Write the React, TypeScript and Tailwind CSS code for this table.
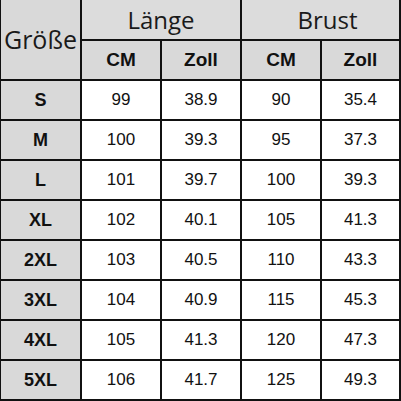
import React from 'react'

const rows = [
  ['S', '99', '38.9', '90', '35.4'],
  ['M', '100', '39.3', '95', '37.3'],
  ['L', '101', '39.7', '100', '39.3'],
  ['XL', '102', '40.1', '105', '41.3'],
  ['2XL', '103', '40.5', '110', '43.3'],
  ['3XL', '104', '40.9', '115', '45.3'],
  ['4XL', '105', '41.3', '120', '47.3'],
  ['5XL', '106', '41.7', '125', '49.3'],
]

export default function App() {
  return (
    <div className="w-[401px] h-[401px] bg-white">
      <div className="grid w-[401px] h-[401px] bg-[#111] gap-[2px] pl-[1px] pr-[2px] pb-[2px] grid-cols-[79px_78px_78px_78px_77px] grid-rows-[39px_repeat(9,38px)]">
        {/* Header */}
        <div className="row-span-2 bg-[#d9d9d9] flex items-center justify-center text-[25px] text-[#1a1a1a] font-['Open_Sans','Noto_Sans',sans-serif]">
          Größe
        </div>
        <div className="col-span-2 bg-[#dcdcdc] flex items-center justify-center text-[24px] text-[#1a1a1a] font-['Open_Sans','Noto_Sans',sans-serif]">
          Länge
        </div>
        <div className="col-span-2 bg-[#dcdcdc] flex items-center justify-center text-[24px] text-[#1a1a1a] pl-[14px] font-['Open_Sans','Noto_Sans',sans-serif]">
          Brust
        </div>
        {['CM', 'Zoll', 'CM', 'Zoll'].map((h, i) => (
          <div key={i} className="bg-[#d9d9d9] flex items-center justify-center text-[19px] font-bold text-[#111] font-['Liberation_Sans',Arial,sans-serif]">
            {h}
          </div>
        ))}

        {/* Body */}
        {rows.map(r => (
          <React.Fragment key={r[0]}>
            <div className="bg-[#d9d9d9] flex items-center justify-center text-[18px] font-bold text-[#111] font-['Liberation_Sans',Arial,sans-serif]">
              {r[0]}
            </div>
            {r.slice(1).map((v, i) => (
              <div key={i} className="bg-white flex items-center justify-center text-[17px] text-[#111] font-['Liberation_Sans',Arial,sans-serif]">
                {v}
              </div>
            ))}
          </React.Fragment>
        ))}
      </div>
    </div>
  )
}
